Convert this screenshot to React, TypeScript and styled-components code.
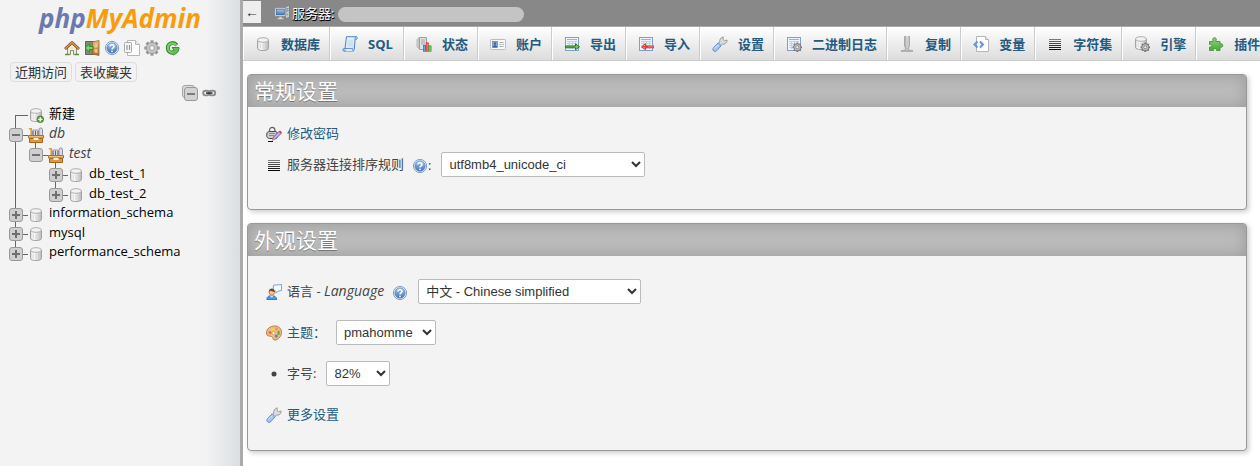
import React from "react";
import styled, { createGlobalStyle } from "styled-components";

const GlobalStyle = createGlobalStyle`
  * { box-sizing: border-box; }
  body {
    margin: 0;
    background: #fff;
    color: #444;
    font-family: "Open Sans", "Noto Sans CJK SC", sans-serif;
    font-size: 13px;
    line-height: 20px;
    overflow-x: hidden;
  }
  a { color: #235a81; text-decoration: none; }
  a:hover { text-decoration: underline; }
`;

/* ---------- icons ---------- */

const Svg = styled.svg`
  display: block;
  flex: none;
  width: 16px;
  height: 16px;
`;

const SharedPaint = styled.svg`
  position: absolute;
  width: 0;
  height: 0;
`;

const Paints = () => (
  <SharedPaint aria-hidden="true">
    <defs>
      <linearGradient id="metal" x1="0" x2="1" y1="0" y2="0">
        <stop offset="0" stopColor="#d6d6d6" />
        <stop offset="0.3" stopColor="#ffffff" />
        <stop offset="0.6" stopColor="#e0e0e0" />
        <stop offset="1" stopColor="#b8b8b8" />
      </linearGradient>
      <linearGradient id="blue" x1="0" x2="0" y1="0" y2="1">
        <stop offset="0" stopColor="#a9c8ee" />
        <stop offset="1" stopColor="#3f74b8" />
      </linearGradient>
      <linearGradient id="paper" x1="0" x2="1" y1="0" y2="1">
        <stop offset="0" stopColor="#f4f9ff" />
        <stop offset="1" stopColor="#c3dcf7" />
      </linearGradient>
      <linearGradient id="wood" x1="0" x2="0" y1="0" y2="1">
        <stop offset="0" stopColor="#eec078" />
        <stop offset="1" stopColor="#b06a1c" />
      </linearGradient>
      <linearGradient id="leaf" x1="0" x2="0" y1="0" y2="1">
        <stop offset="0" stopColor="#8fd47f" />
        <stop offset="1" stopColor="#4ea53f" />
      </linearGradient>
      <linearGradient id="lines" gradientUnits="userSpaceOnUse" x1="0" x2="0" y1="2" y2="14">
        <stop offset="0" stopColor="#888" />
        <stop offset="1" stopColor="#000" />
      </linearGradient>
    </defs>
  </SharedPaint>
);

const Cylinder = () => (
  <>
    <path d="M2.500 4v8.500c0 1.200 2.200 2 5.500 2s5.500-.8 5.500-2V4" fill="url(#metal)" stroke="#a3a3a3" />
    <ellipse cx="8" cy="4" rx="5.500" ry="2.300" fill="#f2f2f2" stroke="#b0b0b0" />
    <path d="M5.500 7.500v5M8 8v5M10.500 7.500v5" stroke="#cfcfcf" strokeWidth="0.700" />
  </>
);

const Cog = ({ cx, cy, r, color = "#8a8a8a" }: { cx: number; cy: number; r: number; color?: string }) => (
  <g transform={`translate(${cx} ${cy})`}>
    {[0, 45, 90, 135].map((a) => (
      <rect key={a} x={-r / 5} y={-r} width={r / 2.5} height={r * 2} fill={color} transform={`rotate(${a})`} />
    ))}
    <circle r={r * 0.74} fill="#c6c6c6" stroke={color} strokeWidth="0.800" />
    <circle r={r * 0.32} fill="#f4f4f4" stroke={color} strokeWidth="0.800" />
  </g>
);

const Sheet = () => (
  <>
    <rect x="1.500" y="1.500" width="13" height="13" fill="#eef4fc" stroke="#7f9fd0" />
    <path d="M3 3.500h10" stroke="#8ac98a" />
    <path d="M3 5.500h10M3 7.500h10M3 9.500h10M3 11.500h10M5.500 5v8M8.500 5v8M11.500 5v8" stroke="#b5c6de" strokeWidth="0.700" />
  </>
);

const Wrench = () => (
  <>
    <path d="M7.800 6.200c-.6-2.200.8-4.800 3.400-5.400L11 3.400l1.500 1.300 2.600-.7c.3 2.700-2.200 4.700-4.800 4.200L8.800 9.600 6.400 7.300z" fill="#dcdcdc" stroke="#8c8c8c" strokeWidth="0.800" />
    <path d="M6.200 6.800l3 3-4.500 4.900c-1 1-2.400.9-3.200.1s-.9-2.200.1-3.200z" fill="#a5c4f1" stroke="#5d86c8" strokeWidth="0.900" />
    <path d="M6.300 8.600l-4 4" stroke="#dcebff" strokeWidth="1" />
  </>
);

const art: Record<string, React.ReactNode> = {
  home: (
    <>
      <path d="M3.500 8v6.500h3v-4h3v4h3V8L8 3.500z" fill="#f2ead8" stroke="#8c7f68" strokeWidth="0.900" />
      <path d="M1 9l7-6.500L15 9" fill="none" stroke="#7a4a1c" strokeWidth="2.800" strokeLinejoin="round" />
      <path d="M1.300 8.700L8 2.500l6.700 6.200" fill="none" stroke="#d89a4e" strokeWidth="1.500" />
      <path d="M1 14.500h4.500M10.500 14.500H15" stroke="#4f9a34" strokeWidth="1.500" />
    </>
  ),
  exit: (
    <>
      <path d="M1.500 1.500h9v13h-9z" fill="#7d8a78" stroke="#5d665a" />
      <path d="M8.500 2l6.500-1.500V15.500L8.500 14z" fill="url(#wood)" stroke="#9b6a34" strokeWidth="0.800" />
      <path d="M10.500 4l3-.6v4l-3 .3zM10.500 9l3 .2v3.800l-3-.6z" fill="#e9c596" />
      <path d="M1 8l4.500-4v2.500H9v3H5.500V12z" fill="#7ed36b" stroke="#2c8a24" strokeWidth="0.900" />
    </>
  ),
  help: (
    <>
      <circle cx="8" cy="8" r="6.600" fill="#eaf1fa" stroke="#7195c4" strokeWidth="0.900" />
      <circle cx="8" cy="8" r="5.200" fill="url(#blue)" stroke="#5681ba" strokeWidth="0.600" />
      <path d="M6 6.500c0-2.400 4-2.300 4 0C10 7.800 8 7.800 8 9.400" fill="none" stroke="#fff" strokeWidth="1.500" />
      <circle cx="8" cy="11.300" r="0.900" fill="#fff" />
    </>
  ),
  doc: (
    <>
      <path d="M3.500.5h8l4 4v11h-12z" fill="#fdfdfd" stroke="#b6b6b6" />
      <path d="M11.500.5v4h4" fill="#e8e8e8" stroke="#b6b6b6" />
      <rect x="0.500" y="2.500" width="7" height="10" rx="1" fill="#f6f6f6" stroke="#a9a9a9" />
      <path d="M3 5v5M5.500 5v5" stroke="#9d9d9d" strokeWidth="1.300" />
    </>
  ),
  cog: <Cog cx={8} cy={8} r={7.6} color="#929292" />,
  reload: (
    <>
      <path d="M12.800 5.200C9.500 1.200 3.800 3.400 3.800 8c0 3 2.200 5 5 4.800" fill="none" stroke="#2f8a2c" strokeWidth="4" />
      <path d="M8 7.500h7c.2 3.800-2.200 6.500-6 7.500l-2-3.500 3-1.500z" fill="#66bb58" stroke="#2f8a2c" strokeWidth="0.900" />
      <path d="M12.300 5.200C9.300 1.600 3.900 3.600 3.900 8c0 3 2.200 4.900 5 4.700" fill="none" stroke="#79cb6a" strokeWidth="2.200" />
    </>
  ),
  collapse: (
    <>
      <rect x="0.500" y="0.500" width="12" height="12" rx="2.500" fill="#ddd" stroke="#a2a2a2" />
      <rect x="2.500" y="2.500" width="13" height="13" rx="2.500" fill="#d2d2d2" stroke="#999" />
      <path d="M5 9h8" stroke="#666" strokeWidth="1.600" />
    </>
  ),
  chain: (
    <>
      <rect x="2.200" y="5.800" width="6" height="4.600" rx="2.300" fill="none" stroke="#8a8a8a" strokeWidth="1.900" />
      <rect x="8.200" y="5.800" width="6" height="4.600" rx="2.300" fill="none" stroke="#8a8a8a" strokeWidth="1.900" />
      <path d="M5 8.100h6.500" stroke="#333" strokeWidth="1.600" />
    </>
  ),
  db: <Cylinder />,
  dbNew: (
    <>
      <Cylinder />
      <circle cx="12.300" cy="12.300" r="3.300" fill="#5bab3e" stroke="#34791f" strokeWidth="0.800" />
      <path d="M12.300 10.200v4.200M10.200 12.300h4.200" stroke="#fff" strokeWidth="1.300" />
    </>
  ),
  group: (
    <>
      <path d="M.8 1.800h2.400V9H1.800" fill="none" stroke="#e0a030" strokeWidth="1.600" />
      <path d="M5 9V3.500M7.500 9V3.500M10 9V3.500" stroke="#6b5a6c" strokeWidth="1.300" />
      <path d="M4.500 3h5.500" stroke="#a89aa8" />
      <rect x="11" y="1" width="3.500" height="8" rx="1.700" fill="#dcdce4" stroke="#8d8b9c" />
      <path d="M.5 8.500h15v2.500H.5z" fill="#f0bd74" stroke="#b06f1c" />
      <path d="M1.500 11.500h13v4h-13z" fill="#dd9744" stroke="#a8651a" />
      <path d="M5.500 11h5v2h-5z" fill="#fff3dc" />
    </>
  ),
  server: (
    <>
      <path d="M11.500 1.500l4-1v12l-4 1z" fill="#c8cdd0" stroke="#777" strokeWidth="0.800" />
      <path d="M12.500 4l2-.4M12.500 6l2-.4" stroke="#555" strokeWidth="0.800" />
      <circle cx="13.500" cy="9.500" r="0.800" fill="#58c040" />
      <rect x="0.800" y="2.800" width="11" height="8.500" rx="0.800" fill="#e3e6ea" stroke="#888" strokeWidth="0.900" />
      <rect x="2.300" y="4.200" width="8" height="5.600" fill="url(#blue)" stroke="#335f9c" strokeWidth="0.600" />
      <path d="M5 11.500h3v1.500h2v1.500H3V13h2z" fill="#d5d5d5" stroke="#888" strokeWidth="0.600" />
    </>
  ),
  sql: (
    <>
      <path d="M4.500.7h9.800c1.400 0 1.400 2.300 0 2.600h-1.200L12.300 13.300c-.1 1-.8 1.700-1.600 1.700H2c-1.600 0-1.600-2.300 0-2.500h1z" fill="url(#paper)" stroke="#4d82c6" />
      <path d="M2 15c1.500 0 1.600-1.400 1.300-2.500h7.200c-.2 1.300.2 2.500 1.100 2.500M13.100 3.300c-.2-1.300.4-2.600 1.200-2.600" fill="#dceafb" stroke="#4d82c6" strokeWidth="0.800" />
      <path d="M5.800 5h5M5.600 7h5M5.400 9h5" stroke="#b6d2f3" strokeWidth="0.800" />
    </>
  ),
  status: (
    <>
      <path d="M1 3.500l2-2v11l-2-1.500z" fill="#d4d4d4" stroke="#aaa" strokeWidth="0.700" />
      <path d="M3.500 1.500h7v12h-7z" fill="#e2e2e2" stroke="#9e9e9e" />
      <path d="M5 4h4M5 6h4M5 8h4" stroke="#a5a5a5" />
      <rect x="7.300" y="9.300" width="2.300" height="6" fill="#6ba1ec" stroke="#3064b4" strokeWidth="0.600" />
      <rect x="10" y="6.800" width="2.300" height="8.500" fill="#f36b5c" stroke="#b82c22" strokeWidth="0.600" />
      <rect x="12.800" y="9.800" width="2.300" height="5.500" fill="#74cc63" stroke="#368c29" strokeWidth="0.600" />
    </>
  ),
  account: (
    <>
      <rect x="0.500" y="3.500" width="15" height="10" rx="0.800" fill="#f7f9fb" stroke="#b9bdc1" />
      <rect x="2.500" y="5.500" width="5" height="6" fill="#7fb3ef" stroke="#4e86c9" strokeWidth="0.700" />
      <circle cx="5" cy="7.500" r="1.300" fill="#8d4e2b" />
      <path d="M3 11.300c0-2.600 4-2.600 4 0z" fill="#2d5fa8" />
      <path d="M9.500 6.500h4M9.500 8.500h2M12.500 8.500h1.500M9.500 10.500h4" stroke="#a5abb2" />
    </>
  ),
  exportIcon: (
    <>
      <Sheet />
      <path d="M1.500 10h10V7.800l4 3-4 3V11.800h-10z" fill="#7cc25e" stroke="#226b1c" strokeWidth="0.900" />
    </>
  ),
  importIcon: (
    <>
      <Sheet />
      <path d="M16 10H7.500V7.800l-4 3 4 3V11.800H16z" fill="#ff9a92" stroke="#d8281f" strokeWidth="0.900" />
      <path d="M5 10.800h5" stroke="#e02c22" strokeWidth="1.200" />
    </>
  ),
  wrench: <Wrench />,
  binlog: (
    <>
      <Sheet />
      <Cog cx={11.3} cy={11.3} r={4.7} color="#777" />
    </>
  ),
  replication: (
    <>
      <path d="M5.500.5v9.500L7 13V.5z" fill="#c9c9c9" stroke="#999" strokeWidth="0.800" />
      <path d="M10.500.5v9.500L9 13V.5z" fill="#e8e8e8" stroke="#999" strokeWidth="0.800" />
      <path d="M2 15h12" stroke="#a0a0a0" strokeWidth="1.600" />
      <path d="M4.500 13.600h7" stroke="#c0c0c0" strokeWidth="1.200" />
    </>
  ),
  variables: (
    <>
      <path d="M3.500.5h9l3 3v12h-12z" fill="#fdfdfd" stroke="#b5b5b5" />
      <path d="M12.500.5v3h3" fill="#ececec" stroke="#b5b5b5" />
      <path d="M4.500 5.500L1.500 8.500l3 3M7 5.500l3 3-3 3" fill="none" stroke="#5b98e8" strokeWidth="2" />
    </>
  ),
  charset: <path d="M2 3.500h12M2 5.500h12M2 7.500h12M2 9.500h12M2 11.500h12M2 13.500h12" stroke="url(#lines)" strokeWidth="1" />,
  engine: (
    <>
      <g transform="translate(-1 -1)"><Cylinder /></g>
      <Cog cx={11.3} cy={11.3} r={4.7} color="#707070" />
    </>
  ),
  plugin: (
    <path
      d="M1.500 5.500h3.500V4.300C3.300 1 9.700 1 8 4.300V5.500h4V8c3.800-1.300 3.800 4.300 0 3v3.500H8.500c.8-2.800-3.800-2.800-3 0H1.500V11c2.800.6 2.800-3.200 0-2.600z"
      fill="url(#leaf)"
      stroke="#4b9a3d"
    />
  ),
  password: (
    <>
      <path d="M3.500 6V4.500C3.500.3 9 .3 9 4.500V6" fill="none" stroke="#666" strokeWidth="1.300" />
      <path d="M.8 8c0-2 1.500-2.500 3-2.500h5.500c1.500 0 2 1 2 2.500v2.500c0 1.500-1.500 2-3 2H3.800c-1.500 0-3-1-3-2z" fill="#cfcfcf" stroke="#444" />
      <path d="M3 7.500h6M3 9.500h5" stroke="#888" />
      <path d="M6.500 14l1-3L13 5.500l2 2-5.500 5.500z" fill="#c3b4ec" stroke="#54449a" strokeWidth="0.900" />
      <path d="M13 5.500l1-1 2 2-1 1z" fill="#e8312a" />
      <path d="M6 14.600l1-3 2 2z" fill="#f0a53a" />
      <path d="M2 15.500h5" stroke="#111" />
    </>
  ),
  language: (
    <>
      <path d="M7.500 1.200l8-.7v6l-3.500.7-2 2V7.200H7z" fill="#f2f8ff" stroke="#7fa3d6" />
      <path d="M.8 15.500c0-5.500 9.500-5.500 10 0z" fill="#4f9bea" stroke="#2561ae" strokeWidth="0.800" />
      <path d="M4 11.500l1.800 1.800 1.800-1.800" fill="#fff" stroke="#d5e4f5" strokeWidth="0.600" />
      <circle cx="5.800" cy="8.300" r="2.700" fill="#f5c795" stroke="#a3662d" strokeWidth="0.700" />
      <path d="M2.800 8c0-4.600 6.200-4.500 6 0C7 7.800 5.500 7.300 4.500 6.800z" fill="#7b4620" />
    </>
  ),
  theme: (
    <>
      <path d="M8.500 1c4.300 0 7 2.700 7 6.300 0 4.200-3.500 7.700-6.800 7.700-2.400 0-1.200-2.600-2.700-3.400C4.300 10.800.5 12 .5 7.900.5 3.800 4.300 1 8.500 1z" fill="#eebd84" stroke="#b87e45" />
      <circle cx="4" cy="7.500" r="1.500" fill="#f0685c" />
      <circle cx="6.500" cy="4.300" r="1.500" fill="#f5d432" />
      <circle cx="10.500" cy="4" r="1.400" fill="#f29a3a" />
      <path d="M11.500 5.800h2.200v4h-2.200z" fill="#5dab55" />
      <circle cx="10.300" cy="11" r="1.500" fill="#4f86d4" />
      <circle cx="7.500" cy="8" r="1.500" fill="#fff" stroke="#b87e45" strokeWidth="0.600" />
    </>
  ),
  bullet: <circle cx="8" cy="8" r="2.500" fill="#444" />,
};

const Icon = ({ name }: { name: string }) => (
  <Svg viewBox="0 0 16 16" aria-hidden="true">{art[name]}</Svg>
);

/* ---------- page frame ---------- */

const Page = styled.div`
  display: flex;
  min-height: 100vh;
`;

const Sidebar = styled.aside`
  flex: none;
  width: 243px;
  padding-top: 2px;
  border-right: 3px solid #aaa;
  background: #f3f3f3 linear-gradient(to right, #f3f3f3 206px, #dbdee1 240px);
`;

const Main = styled.main`
  flex: 1;
  min-width: 0;
`;

/* ---------- sidebar ---------- */

const Logo = styled.a`
  display: block;
  text-align: center;
  font: italic bold 26px/32px "Open Sans", sans-serif;
  && { color: #f89c0e; text-decoration: none; }
`;

const LogoStart = styled.span`
  color: #6c78af;
`;

const QuickLinks = styled.nav`
  display: flex;
  justify-content: center;
  gap: 4px;
  padding: 6px 0 6px 4px;
`;

const ListButtons = styled.div`
  display: flex;
  gap: 3px;
  padding: 0 10px;
`;

const ListButton = styled.button`
  height: 20px;
  padding: 0 4px;
  border: 1px solid #ddd;
  border-radius: 4px;
  background: #f2f2f2;
  color: #333;
  font: inherit;
  line-height: 18px;
`;

const TreeTools = styled.div`
  display: flex;
  justify-content: flex-end;
  gap: 3px;
  padding: 3px 23px 2px 0;
`;

const PlainButton = styled.button`
  padding: 0;
  border: 0;
  background: none;
`;

const Tree = styled.ul`
  list-style: none;
  margin: 0;
  padding: 0 0 0 8px;
`;

const Branch = styled.ul<{ $through?: boolean }>`
  list-style: none;
  margin: 0;
  padding: 0 0 0 20px;
  background: ${(p) => (p.$through ? "linear-gradient(#666, #666) 7px 0 / 1px 100% no-repeat" : "none")};
`;

const TreeRow = styled.div<{ $tight?: boolean }>`
  display: flex;
  align-items: center;
  height: ${(p) => (p.$tight ? 19 : 20)}px;
`;

const lineSpan = { first: "7px 100% / 1px 8px", middle: "7px 0 / 1px 100%", last: "7px 0 / 1px 12px" };

const Joint = styled.div<{ $span: keyof typeof lineSpan }>`
  display: flex;
  align-items: center;
  width: 20px;
  height: 100%;
  padding: 4px 0 0 1px;
  background:
    linear-gradient(#666, #666) ${(p) => lineSpan[p.$span]} no-repeat,
    linear-gradient(#666, #666) 7px 12px / 13px 1px no-repeat;
`;

const Toggle = styled.button`
  display: grid;
  place-items: center;
  width: 14px;
  height: 14px;
  padding: 0;
  border: 1px solid #999;
  border-radius: 3px;
  background: #cfcfcf;
`;

const ToggleSign = styled.svg`
  width: 8px;
  height: 8px;
`;

const NodeIcon = styled.span`
  padding-top: 4px;
`;

const NodeLink = styled.a<{ $group?: boolean }>`
  padding: 0 0 1px 5px;
  font-size: ${(p) => (p.$group ? 14 : 13)}px;
  font-style: ${(p) => (p.$group ? "italic" : "normal")};
  && { color: ${(p) => (p.$group ? "#444" : "#000")}; }
`;

type NodeProps = {
  label: string;
  icon: string;
  span: keyof typeof lineSpan;
  sign?: "+" | "-";
  tight?: boolean;
};

const TreeNode = ({ label, icon, span, sign, tight }: NodeProps) => (
  <TreeRow $tight={tight}>
    <Joint $span={span}>
      {sign && (
        <Toggle type="button" aria-label={`${sign} ${label}`}>
          <ToggleSign viewBox="0 0 8 8">
            <path d={sign === "+" ? "M0 4h8M4 0v8" : "M0 4h8"} stroke="#707070" strokeWidth="2" />
          </ToggleSign>
        </Toggle>
      )}
    </Joint>
    <NodeIcon><Icon name={icon} /></NodeIcon>
    <NodeLink href="#" $group={icon === "group"}>{label}</NodeLink>
  </TreeRow>
);

/* ---------- top bars ---------- */

const ServerBar = styled.header`
  display: flex;
  align-items: center;
  height: 26px;
  background: #888;
  color: #fff;
  text-shadow: 0 1px 0 #000, 1px 1px 0 #000;
`;

const BackButton = styled.button`
  align-self: flex-start;
  width: 18px;
  height: 22px;
  margin: 1px 13px 0 0;
  padding: 0;
  border: 0;
  background: #eee;
  color: #333;
  font: 14px/18px "Liberation Sans", sans-serif;
`;

const ServerLabel = styled.div`
  display: flex;
  align-items: center;
  gap: 2px;
`;

const ServerName = styled.div`
  width: 186px;
  height: 15px;
  margin: 3px 0 0 4px;
  border-radius: 8px;
  background: #c4c4c4;
`;

const TabBar = styled.nav`
  display: flex;
  overflow: hidden;
  border-top: 1px solid #aaa;
  border-bottom: 1px solid #ccc;
  background: linear-gradient(#fff, #dcdcdc);
`;

const Tab = styled.a`
  flex: none;
  display: flex;
  align-items: center;
  gap: 10px;
  min-width: 74px;
  height: 33px;
  padding: 0 9px 0 11px;
  border-left: 1px solid #fff;
  border-right: 1px solid #ccc;
  font-weight: bold;
  white-space: nowrap;
`;

const tabs: [string, string][] = [
  ["db", "数据库"],
  ["sql", "SQL"],
  ["status", "状态"],
  ["account", "账户"],
  ["exportIcon", "导出"],
  ["importIcon", "导入"],
  ["wrench", "设置"],
  ["binlog", "二进制日志"],
  ["replication", "复制"],
  ["variables", "变量"],
  ["charset", "字符集"],
  ["engine", "引擎"],
  ["plugin", "插件"],
];

/* ---------- settings panels ---------- */

const Panels = styled.div`
  display: flex;
  flex-direction: column;
  gap: 13px;
  padding: 13px 13px 15px 4px;
`;

const Panel = styled.section`
  overflow: hidden;
  border: 1px solid #999;
  border-radius: 4px;
  background: #f3f3f3;
  box-shadow: 2px 2px 5px #ccc;
`;

const PanelTitle = styled.h2`
  margin: 0;
  padding: 0 6px;
  background: #bbb;
  box-shadow: inset 0 0 15px #999;
  color: #fff;
  font-size: 21px;
  font-weight: normal;
  line-height: 32px;
  text-shadow: 0 1px 0 #777;
`;

const PanelBody = styled.div<{ $compact?: boolean }>`
  display: flex;
  flex-direction: column;
  gap: ${(p) => (p.$compact ? 6 : 16)}px;
  padding: ${(p) => (p.$compact ? "14px 18px 32px" : "23px 18px")};
`;

const SettingRow = styled.div`
  display: flex;
  align-items: center;
  gap: 5px;
  height: 25px;
`;

const Caption = styled.label`
  padding-bottom: 2px;
`;

const RowLink = styled.a`
  padding-bottom: 2px;
`;

const Foreign = styled.em`
  font-size: 14px;
`;

const HelpGroup = styled.span`
  display: flex;
  align-items: center;
  margin-left: 3px;
`;

const HelpLink = styled.a`
  padding-top: 3px;
`;

const Select = styled.select<{ $width: number }>`
  width: ${(p) => p.$width}px;
  height: 25px;
  margin-left: 5px;
  padding: 0 3px;
  border: 1px solid #bbb;
  border-radius: 2px;
  background: #fff;
  color: #333;
  font: 13px "Liberation Sans", "Noto Sans CJK SC", sans-serif;
`;

const App = () => (
  <>
    <GlobalStyle />
    <Paints />
    <Page>
      <Sidebar>
        <Logo href="#"><LogoStart>php</LogoStart>MyAdmin</Logo>
        <QuickLinks>
          {["home", "exit", "help", "doc", "cog", "reload"].map((n) => (
            <a key={n} href="#" aria-label={n}><Icon name={n} /></a>
          ))}
        </QuickLinks>
        <ListButtons>
          <ListButton type="button">近期访问</ListButton>
          <ListButton type="button">表收藏夹</ListButton>
        </ListButtons>
        <TreeTools>
          <PlainButton type="button" aria-label="collapse"><Icon name="collapse" /></PlainButton>
          <PlainButton type="button" aria-label="link"><Icon name="chain" /></PlainButton>
        </TreeTools>
        <Tree>
          <li><TreeNode label="新建" icon="dbNew" span="first" /></li>
          <li>
            <TreeNode label="db" icon="group" span="middle" sign="-" />
            <Branch $through>
              <li>
                <TreeNode label="test" icon="group" span="last" sign="-" />
                <Branch>
                  <li><TreeNode label="db_test_1" icon="db" span="middle" sign="+" /></li>
                  <li><TreeNode label="db_test_2" icon="db" span="last" sign="+" /></li>
                </Branch>
              </li>
            </Branch>
          </li>
          <li><TreeNode label="information_schema" icon="db" span="middle" sign="+" tight /></li>
          <li><TreeNode label="mysql" icon="db" span="middle" sign="+" /></li>
          <li><TreeNode label="performance_schema" icon="db" span="last" sign="+" tight /></li>
        </Tree>
      </Sidebar>
      <Main>
        <ServerBar>
          <BackButton type="button">←</BackButton>
          <ServerLabel><Icon name="server" />服务器:</ServerLabel>
          <ServerName />
        </ServerBar>
        <TabBar>
          {tabs.map(([icon, label]) => (
            <Tab key={label} href="#"><Icon name={icon} />{label}</Tab>
          ))}
        </TabBar>
        <Panels>
          <Panel>
            <PanelTitle>常规设置</PanelTitle>
            <PanelBody $compact>
              <SettingRow>
                <Icon name="password" />
                <RowLink href="#">修改密码</RowLink>
              </SettingRow>
              <SettingRow>
                <Icon name="charset" />
                <Caption htmlFor="collation">服务器连接排序规则</Caption>
                <HelpGroup>
                  <HelpLink href="#" aria-label="help"><Icon name="help" /></HelpLink>:
                </HelpGroup>
                <Select id="collation" $width={204}><option>utf8mb4_unicode_ci</option></Select>
              </SettingRow>
            </PanelBody>
          </Panel>
          <Panel>
            <PanelTitle>外观设置</PanelTitle>
            <PanelBody>
              <SettingRow>
                <Icon name="language" />
                <Caption htmlFor="language">语言 - <Foreign>Language</Foreign></Caption>
                <HelpGroup>
                  <HelpLink href="#" aria-label="help"><Icon name="help" /></HelpLink>
                </HelpGroup>
                <Select id="language" $width={223}><option>中文 - Chinese simplified</option></Select>
              </SettingRow>
              <SettingRow>
                <Icon name="theme" />
                <Caption htmlFor="theme"><a href="#">主题：</a></Caption>
                <Select id="theme" $width={100}><option>pmahomme</option></Select>
              </SettingRow>
              <SettingRow>
                <Icon name="bullet" />
                <Caption htmlFor="fontsize">字号:</Caption>
                <Select id="fontsize" $width={64}><option>82%</option></Select>
              </SettingRow>
              <SettingRow>
                <Icon name="wrench" />
                <RowLink href="#">更多设置</RowLink>
              </SettingRow>
            </PanelBody>
          </Panel>
        </Panels>
      </Main>
    </Page>
  </>
);

export default App;
